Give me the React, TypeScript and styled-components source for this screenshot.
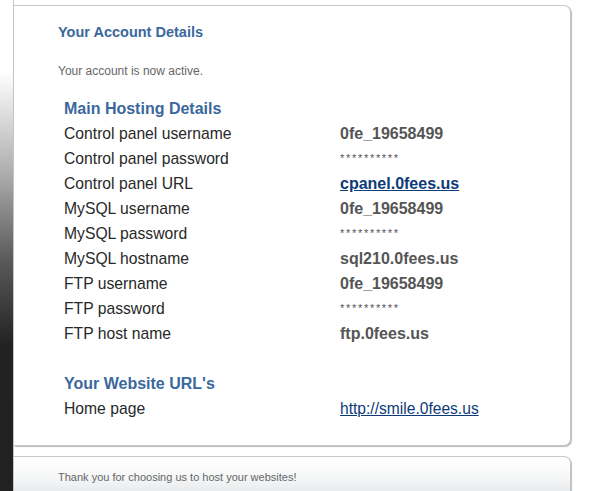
import React from "react";
import styled, { createGlobalStyle } from "styled-components";

const Global = createGlobalStyle`
  html, body { margin: 0; padding: 0; background: #fff; }
  body { font-family: "Liberation Sans", Arial, sans-serif; width: 599px; height: 491px; overflow: hidden; }
`;

const Page = styled.div`
  display: flex;
  width: 599px;
  height: 491px;
`;

const SideStrip = styled.div`
  width: 13px;
  flex: none;
  background: linear-gradient(to bottom, #fff 0px, #fff 72px, #b0b0b0 170px, #5a5a5a 260px, #222 345px, #212121 491px);
`;

const Main = styled.div`
  flex: none;
  width: 557px;
  border-left: 1px solid #c4c4c4;
  padding-top: 5px;
  display: flex;
  flex-direction: column;
  gap: 10px;
`;

const Card = styled.div`
  background: #fff;
  border-top: 1px solid #c8c8c8;
  border-right: 1px solid #c4c4c4;
  border-bottom: 1px solid #c4c4c4;
  border-radius: 0 7px 7px 0;
  box-shadow: 1px 1px 1px #bcbcbc;
  padding: 17px 0 24px 44px;
`;

const FooterCard = styled(Card)`
  background: linear-gradient(to bottom, #fff 0%, #fafbfb 35%, #e5e8eb 100%);
  padding: 13px 0 12px 44px;
  height: 44px;
  box-sizing: border-box;
`;

const Title = styled.h2`
  margin: 0;
  font-size: 14.5px;
  line-height: 18px;
  font-weight: bold;
  color: #3a689c;
`;

const Note = styled.p`
  margin: 23px 0 0;
  font-size: 12px;
  line-height: 14px;
  color: #666;
`;

const Details = styled.div`
  margin: 18px 0 0 6px;
  display: grid;
  grid-template-columns: 276px 1fr;
  grid-auto-rows: 25px;
  align-items: center;
`;

const SectionHead = styled.div`
  grid-column: 1 / -1;
  font-size: 16px;
  font-weight: bold;
  color: #3a689c;
  line-height: 25px;
`;

const Spacer = styled.div`
  grid-column: 1 / -1;
`;

const Label = styled.div`
  font-size: 15.7px;
  color: #282828;
  line-height: 25px;
`;

const Value = styled.div<{ $kind?: "bold" | "mask" }>`
  font-size: ${(p) => (p.$kind === "mask" ? "11px" : "16px")};
  font-weight: ${(p) => (p.$kind === "mask" ? "normal" : "bold")};
  color: #555;
  line-height: 25px;
  letter-spacing: ${(p) => (p.$kind === "mask" ? "1.7px" : "0")};
`;

const Link = styled.a<{ $bold?: boolean; $size?: string }>`
  font-size: ${(p) => p.$size ?? "16px"};
  line-height: 25px;
  font-weight: ${(p) => (p.$bold ? "bold" : "normal")};
  color: #0d3b78;
  text-decoration: underline;
`;

const FooterText = styled.p`
  margin: 0;
  font-size: 11px;
  line-height: 14px;
  color: #666;
`;

type Row = { label: string; value: string; kind: "bold" | "mask" | "link" };

const rows: Row[] = [
  { label: "Control panel username", value: "0fe_19658499", kind: "bold" },
  { label: "Control panel password", value: "**********", kind: "mask" },
  { label: "Control panel URL", value: "cpanel.0fees.us", kind: "link" },
  { label: "MySQL username", value: "0fe_19658499", kind: "bold" },
  { label: "MySQL password", value: "**********", kind: "mask" },
  { label: "MySQL hostname", value: "sql210.0fees.us", kind: "bold" },
  { label: "FTP username", value: "0fe_19658499", kind: "bold" },
  { label: "FTP password", value: "**********", kind: "mask" },
  { label: "FTP host name", value: "ftp.0fees.us", kind: "bold" },
];

export default function App() {
  return (
    <>
      <Global />
      <Page>
        <SideStrip />
        <Main>
          <Card>
            <Title>Your Account Details</Title>
            <Note>Your account is now active.</Note>
            <Details>
              <SectionHead>Main Hosting Details</SectionHead>
              {rows.map((r) => (
                <React.Fragment key={r.label}>
                  <Label>{r.label}</Label>
                  {r.kind === "link" ? (
                    <div>
                      <Link $bold href="#">{r.value}</Link>
                    </div>
                  ) : (
                    <Value $kind={r.kind}>{r.value}</Value>
                  )}
                </React.Fragment>
              ))}
              <Spacer />
              <SectionHead>Your Website URL's</SectionHead>
              <Label>Home page</Label>
              <div>
                <Link $size="15.6px" href="#">http://smile.0fees.us</Link>
              </div>
            </Details>
          </Card>
          <FooterCard>
            <FooterText>Thank you for choosing us to host your websites!</FooterText>
          </FooterCard>
        </Main>
      </Page>
    </>
  );
}
